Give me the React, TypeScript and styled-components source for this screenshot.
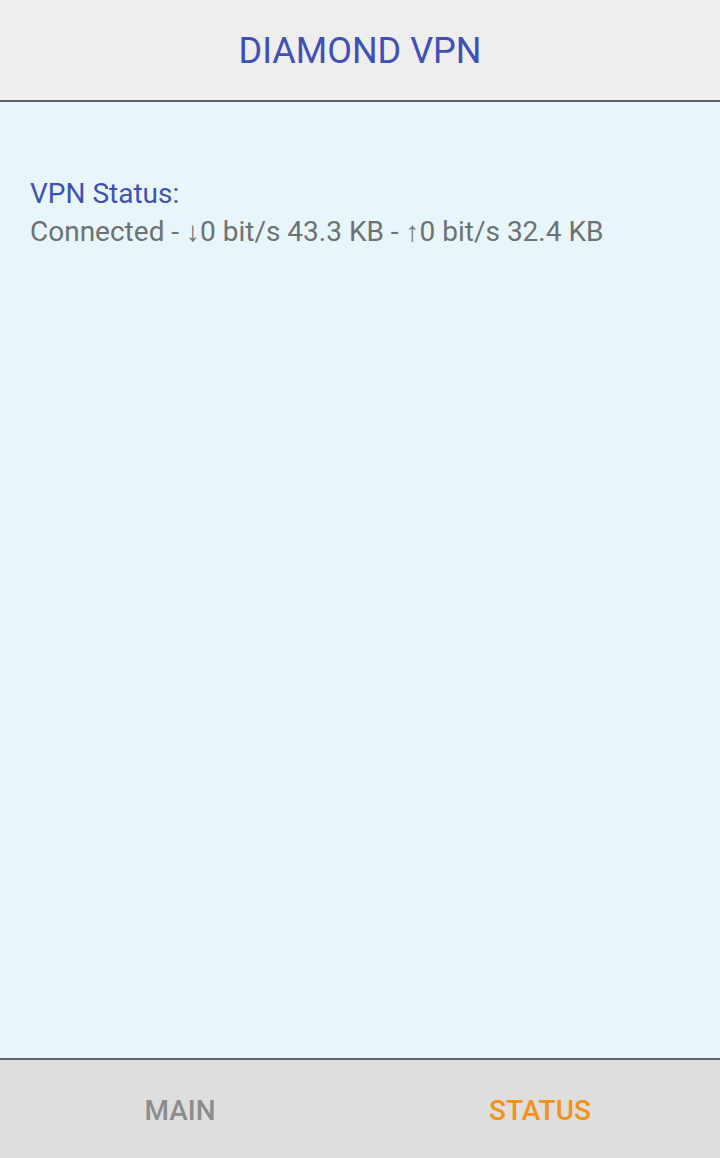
import React from 'react';
import styled, { createGlobalStyle } from 'styled-components';

/** global */
const GlobalStyle = createGlobalStyle`
	html, body {
		margin: 0;
		padding: 0;
		height: 100%;
	}
	body {
		font-family: Roboto, 'Noto Sans', sans-serif;
	}
	#root {
		height: 100%;
	}
`;

/** style */
const Screen = styled('div')`
	display: flex;
	flex-direction: column;
	width: 720px;
	height: 1158px;
	background-color: #e8f6fb;
`;

const Header = styled('header')`
	display: flex;
	align-items: center;
	justify-content: center;
	height: 102px;
	padding-top: 2px;
	background-color: #eeeeee;
	border-bottom: 2px solid #5e6266;
	box-sizing: border-box;
	flex-shrink: 0;
`;

const Title = styled('h1')`
	margin: 0;
	font-size: 36px;
	font-weight: 400;
	color: #3f51b5;
`;

const Content = styled('main')`
	flex: 1;
	padding: 73px 30px 0;
`;

const StatusLabel = styled('div')`
	font-size: 28px;
	line-height: 38px;
	color: #3f51b5;
`;

const StatusText = styled('div')`
	font-size: 28px;
	line-height: 38px;
	color: #6d7272;
`;

const TabBar = styled('nav')`
	display: flex;
	height: 100px;
	flex-shrink: 0;
	background-color: #dedede;
	border-top: 2px solid #5e6266;
	box-sizing: border-box;
`;

const Tab = styled('button')<{ $active?: boolean }>`
	flex: 1;
	display: flex;
	align-items: center;
	justify-content: center;
	padding: 3px 0 0;
	border: none;
	background: transparent;
	font-family: Roboto, 'Noto Sans', sans-serif;
	font-size: 28px;
	font-weight: 500;
	color: ${props => (props.$active ? '#f39218' : '#8c8c8c')};
	cursor: pointer;
`;

/** Component: VPN 상태 화면 */
const App: React.FC = () => {
	const tabs = [
		{ id: 'main', title: 'MAIN', isActive: false },
		{ id: 'status', title: 'STATUS', isActive: true },
	];

	return (
		<>
			<GlobalStyle />
			<Screen>
				<Header>
					<Title>DIAMOND VPN</Title>
				</Header>

				<Content>
					<StatusLabel>VPN Status:</StatusLabel>
					<StatusText>Connected - ↓0 bit/s 43.3 KB - ↑0 bit/s 32.4 KB</StatusText>
				</Content>

				<TabBar>
					{tabs.map(tab => (
						<Tab key={tab.id} $active={tab.isActive}>
							{tab.title}
						</Tab>
					))}
				</TabBar>
			</Screen>
		</>
	);
};

export default App;
